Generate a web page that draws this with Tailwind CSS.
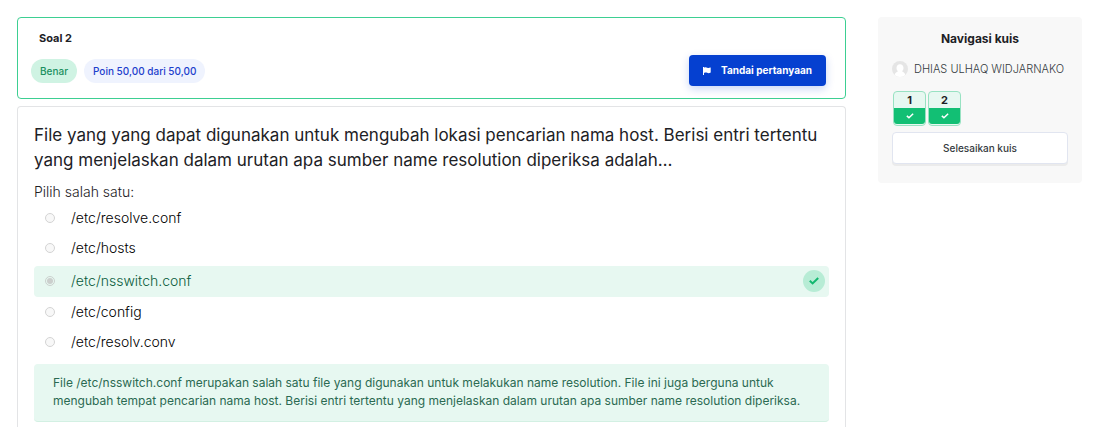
<!DOCTYPE html>
<html lang="id">
<head>
<meta charset="utf-8">
<meta name="viewport" content="width=device-width, initial-scale=1">
<title>Kuis - Soal 2</title>
<script src="https://cdn.jsdelivr.net/npm/@tailwindcss/browser@4"></script>
</head>
<body class="bg-white font-[Inter,sans-serif] text-[#1d2125]">
<div class="flex min-h-screen items-stretch gap-8 pt-[17px] pr-[18px] pl-[17px]">
  <main class="flex min-w-0 flex-1 flex-col gap-[7px]">
    <header class="rounded border border-[#3dcf92] px-[13px] pt-3 pb-3">
      <h1 class="px-2 text-[11px] leading-4 font-bold">Soal 2</h1>
      <div class="mt-[9px] flex items-center justify-between pr-[6px]">
        <div class="flex gap-[7px]">
          <span class="rounded-full bg-[#cff3e3] px-[9px] text-[10px] leading-6 font-medium text-[#1a9060]">Benar</span>
          <span class="rounded-full bg-[#eff3fe] px-[9px] text-[10px] leading-6 font-medium text-[#1d40cc]">Poin 50,00 dari 50,00</span>
        </div>
        <button type="button" class="flex h-[31px] items-center gap-[10px] rounded bg-[#0540d0] px-[14px] text-[10px] font-bold text-white shadow-[0_3px_8px_rgba(5,64,208,0.22)]">
          <svg class="h-2 w-2" viewBox="0 0 8 8" fill="currentColor" aria-hidden="true"><path d="M0 0h1v.7C2.300 0 3.400.4 4.300.8 5.300 1.200 6.200 1 7.200.6c.3-.1.5 0 .5.300v4.300c0 .2-.1.400-.3.500-1.300.6-2.300.5-3.300.1C3 5.400 2.200 5.500 1 6v2H0z"/></svg>
          Tandai pertanyaan
        </button>
      </div>
    </header>

    <section class="flex-1 rounded-t border border-b-0 border-[#e3e4e6] px-4 pt-4">
      <p class="text-[17px] leading-[25px]">File yang yang dapat digunakan untuk mengubah lokasi pencarian nama host. Berisi entri tertentu yang menjelaskan dalam urutan apa sumber name resolution diperiksa adalah…</p>
      <fieldset class="mt-[9px]">
        <legend class="text-sm leading-5 font-light">Pilih salah satu:</legend>
        <div class="flex flex-col text-sm leading-5 font-light text-black">
          <div class="flex h-8 items-center gap-4 pl-[11px]">
            <input id="a0" name="answer" type="radio" disabled class="h-[10px] w-[10px] appearance-none rounded-full border border-[#d4d4d4] bg-[#f8f8f8]">
            <label for="a0">/etc/resolve.conf</label>
          </div>
          <div class="flex h-7 items-center gap-4 pl-[11px]">
            <input id="a1" name="answer" type="radio" disabled class="h-[10px] w-[10px] appearance-none rounded-full border border-[#d4d4d4] bg-[#f8f8f8]">
            <label for="a1">/etc/hosts</label>
          </div>
          <div class="mt-1 mb-px flex h-[31px] items-center gap-4 rounded bg-[#e7f8f1] pr-1 pb-px pl-[11px] text-[#0a5c3c]">
            <input id="a2" name="answer" type="radio" checked disabled class="h-[10px] w-[10px] appearance-none rounded-full border border-[#cbd1ce] bg-[#cbcfcd] bg-clip-content p-px">
            <label for="a2">/etc/nsswitch.conf</label>
            <span class="ml-auto flex h-[22px] w-[22px] items-center justify-center rounded-full bg-[#b7ecd5] text-[#12b76f]">
              <svg class="h-2 w-[10px]" viewBox="0 0 10 8" fill="none" stroke="currentColor" stroke-width="2" role="img" aria-label="Benar"><path d="M.8 3.800 3.600 6.400 9.200 1"/></svg>
            </span>
          </div>
          <div class="flex h-7 items-center gap-4 pl-[11px]">
            <input id="a3" name="answer" type="radio" disabled class="h-[10px] w-[10px] appearance-none rounded-full border border-[#d4d4d4] bg-[#f8f8f8]">
            <label for="a3">/etc/config</label>
          </div>
          <div class="flex h-8 items-center gap-4 pl-[11px]">
            <input id="a4" name="answer" type="radio" disabled class="h-[10px] w-[10px] appearance-none rounded-full border border-[#d4d4d4] bg-[#f8f8f8]">
            <label for="a4">/etc/resolv.conv</label>
          </div>
        </div>
      </fieldset>
      <div class="mt-[6px] rounded border-b border-[#d3f0e3] bg-[#e7f8f1] px-[19px] pt-[10px] pb-[11px] text-xs leading-[18px] text-[#2b6a52]">File /etc/nsswitch.conf merupakan salah satu file yang digunakan untuk melakukan name resolution. File ini juga berguna untuk mengubah tempat pencarian nama host. Berisi entri tertentu yang menjelaskan dalam urutan apa sumber name resolution diperiksa.</div>
    </section>
  </main>

  <aside class="w-[204px] shrink-0 self-start rounded bg-[#f8f8f8] px-[14px] pt-[14px] pb-[19px]">
    <h2 class="text-center text-xs leading-4 font-bold">Navigasi kuis</h2>
    <div class="mt-[14px] flex items-center gap-[6px]">
      <svg class="h-4 w-4 shrink-0" viewBox="0 0 16 16" aria-hidden="true"><circle cx="8" cy="8" r="8" fill="#e5e5e5"/><path d="M8 3.200c2.100 0 3.500 1.500 3.500 3.600 0 1.400-.5 2.500-1.300 3.300 0 1.200 2.700 1.100 3.100 3.800A8 8 0 0 1 8 16a8 8 0 0 1-5.300-2.100c.4-2.700 3.100-2.600 3.100-3.800C5 9.300 4.500 8.200 4.500 6.800 4.500 4.700 5.900 3.200 8 3.200z" fill="#fff"/></svg>
      <span class="text-[11px] leading-4 font-light whitespace-nowrap text-[#343a40]">DHIAS ULHAQ WIDJARNAKO</span>
    </div>
    <nav class="mt-[14px] flex gap-[2px] pl-px" aria-label="Navigasi kuis">
      <a href="#1" class="flex h-[35px] w-[33px] flex-col overflow-hidden rounded border border-[#98e2c2] bg-[#e7f8f1] pb-px text-center text-[11px] leading-4 font-bold">1
        <span class="flex flex-1 items-center justify-center rounded-b-[3px] bg-[#12bf74] text-white"><svg class="h-[6px] w-2" viewBox="0 0 10 8" fill="none" stroke="currentColor" stroke-width="2" aria-hidden="true"><path d="M.8 3.800 3.600 6.400 9.200 1"/></svg></span>
      </a>
      <a href="#2" class="flex h-[35px] w-[33px] flex-col overflow-hidden rounded border border-[#98e2c2] bg-[#e7f8f1] pb-px text-center text-[11px] leading-4 font-bold">2
        <span class="flex flex-1 items-center justify-center rounded-b-[3px] bg-[#12bf74] text-white"><svg class="h-[6px] w-2" viewBox="0 0 10 8" fill="none" stroke="currentColor" stroke-width="2" aria-hidden="true"><path d="M.8 3.800 3.600 6.400 9.200 1"/></svg></span>
      </a>
    </nav>
    <button type="button" class="mt-[6px] h-8 w-full rounded border border-[#e1e5f0] bg-white text-[10px] font-medium text-[#343a40] shadow-[0_2px_0_rgba(0,0,0,0.05)]">Selesaikan kuis</button>
  </aside>
</div>
</body>
</html>
